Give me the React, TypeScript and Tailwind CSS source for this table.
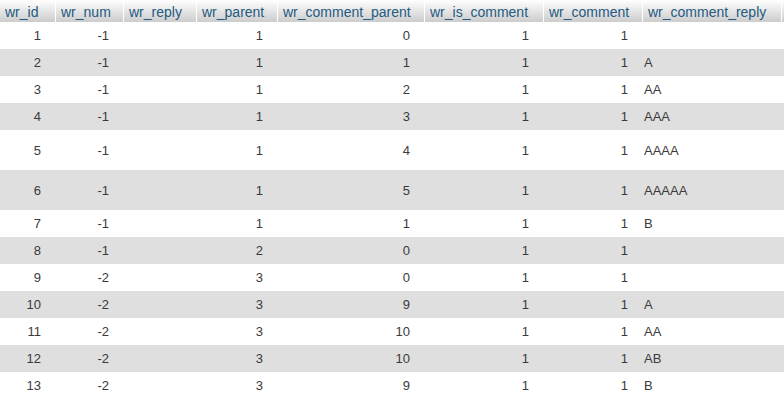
import React from "react";

const headers = [
  "wr_id",
  "wr_num",
  "wr_reply",
  "wr_parent",
  "wr_comment_parent",
  "wr_is_comment",
  "wr_comment",
  "wr_comment_reply",
  "",
];

type Row = [number, number, number, number, number, number, string, boolean?];

const rows: Row[] = [
  [1, -1, 1, 0, 1, 1, ""],
  [2, -1, 1, 1, 1, 1, "A"],
  [3, -1, 1, 2, 1, 1, "AA"],
  [4, -1, 1, 3, 1, 1, "AAA"],
  [5, -1, 1, 4, 1, 1, "AAAA", true],
  [6, -1, 1, 5, 1, 1, "AAAAA", true],
  [7, -1, 1, 1, 1, 1, "B"],
  [8, -1, 2, 0, 1, 1, ""],
  [9, -2, 3, 0, 1, 1, ""],
  [10, -2, 3, 9, 1, 1, "A"],
  [11, -2, 3, 10, 1, 1, "AA"],
  [12, -2, 3, 10, 1, 1, "AB"],
  [13, -2, 3, 9, 1, 1, "B"],
];

const grid =
  "grid grid-cols-[56px_68px_73px_81px_147px_119px_99px_139px_1fr]";

export default function App() {
  return (
    <div
      className="w-[784px] h-[408px] overflow-hidden bg-white"
      style={{ fontFamily: '"Liberation Sans", Arial, sans-serif' }}
    >
      <div
        className={`${grid} h-[22px] bg-gradient-to-b from-white to-[#cccccc] text-[14px] text-[#235a81]`}
      >
        {headers.map((h, i) => (
          <div
            key={i}
            className="flex items-center pl-[5px] pt-[1px] border-r border-white whitespace-nowrap overflow-hidden leading-none"
          >
            {h}
          </div>
        ))}
      </div>
      {rows.map((r, idx) => {
        const tall = r[7];
        return (
          <div
            key={idx}
            className={`${grid} ${tall ? "h-[40px]" : "h-[27px]"} ${
              idx % 2 === 1 ? "bg-[#dfdfdf]" : "bg-white"
            } text-[13px] text-[#3a3a3a]`}
          >
            {[r[0], r[1], null, r[2], r[3], r[4], r[5]].map((v, i) => (
              <div
                key={i}
                className="flex items-center justify-end pr-[15px] leading-none"
              >
                {v === null ? "" : v}
              </div>
            ))}
            <div className="flex items-center pl-[1px] leading-none">{r[6]}</div>
            <div />
          </div>
        );
      })}
    </div>
  );
}
